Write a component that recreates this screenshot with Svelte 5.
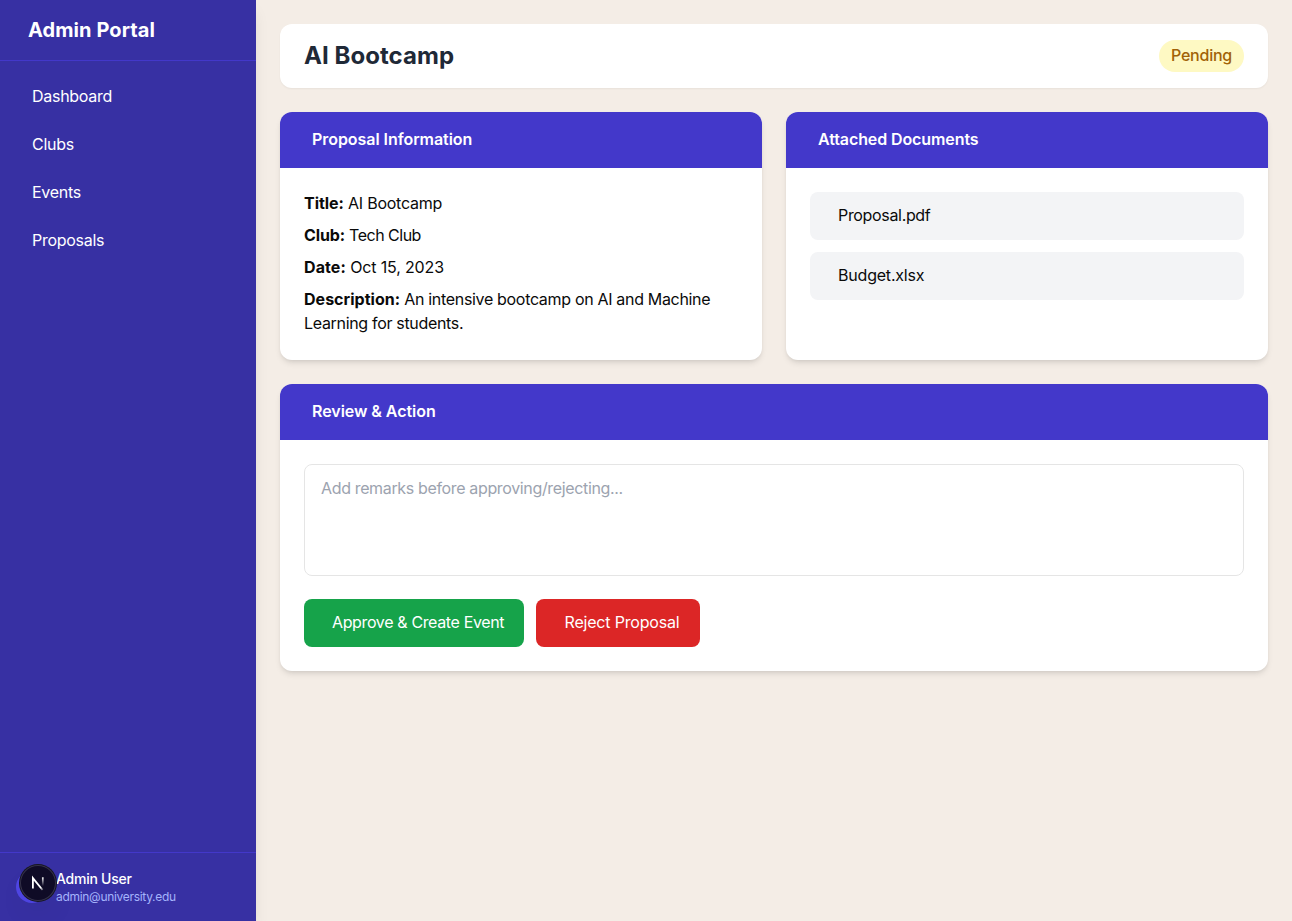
<script>
  const links = ['Dashboard', 'Clubs', 'Events', 'Proposals'];
  const details = [
    { term: 'Title:', value: 'AI Bootcamp', termSpacing: -0.05, spacing: -0.25 },
    { term: 'Club:', value: 'Tech Club', termSpacing: -0.1, spacing: -0.5 },
    { term: 'Date:', value: 'Oct 15, 2023', termSpacing: 0.1, spacing: -0.16 },
    {
      term: 'Description:',
      value: 'An intensive bootcamp on AI and Machine Learning for students.',
      termSpacing: 0.02,
      spacing: -0.32,
    },
  ];
  const files = [
    { name: 'Proposal.pdf', spacing: -0.33 },
    { name: 'Budget.xlsx', spacing: -0.2 },
  ];
</script>

<div class="shell">
  <aside>
    <div class="brand">Admin Portal</div>
    <nav>
      {#each links as link}
        <a href="#top">{link}</a>
      {/each}
    </nav>
    <div class="user">
      <div class="avatar"></div>
      <div class="who">
        <p class="name">Admin User</p>
        <p class="email">admin@university.edu</p>
      </div>
    </div>
  </aside>

  <main>
    <header class="title">
      <h1>AI Bootcamp</h1>
      <span class="status">Pending</span>
    </header>

    <div class="columns">
      <section class="card">
        <h2>Proposal Information</h2>
        <div class="body info">
          {#each details as d}
            <p style:letter-spacing="{d.spacing}px"><strong style:letter-spacing="{d.termSpacing}px">{d.term}</strong> {d.value}</p>
          {/each}
        </div>
      </section>
      <section class="card">
        <h2 class="tight">Attached Documents</h2>
        <ul class="body files">
          {#each files as file}
            <li style:letter-spacing="{file.spacing}px">{file.name}</li>
          {/each}
        </ul>
      </section>
    </div>

    <section class="card">
      <h2>Review &amp; Action</h2>
      <div class="body">
        <textarea placeholder="Add remarks before approving/rejecting..."></textarea>
        <div class="actions">
          <button class="approve">Approve &amp; Create Event</button>
          <button class="reject">Reject Proposal</button>
        </div>
      </div>
    </section>
  </main>

  <div class="devtools">
    <svg width="36" height="36" viewBox="0 0 36 36" fill="none">
      <defs>
        <linearGradient id="diag" x1="18" y1="17" x2="24" y2="25" gradientUnits="userSpaceOnUse">
          <stop stop-color="#fff" /><stop offset="0.6" stop-color="#fff" /><stop offset="1" stop-color="#fff" stop-opacity="0.1" />
        </linearGradient>
        <linearGradient id="stem" x1="22.8" y1="12" x2="22.8" y2="21" gradientUnits="userSpaceOnUse">
          <stop stop-color="#fff" /><stop offset="1" stop-color="#fff" stop-opacity="0" />
        </linearGradient>
      </defs>
      <path d="M12.9 23.4V13.1L22.6 25" stroke="url(#diag)" stroke-width="1.8" />
      <path d="M22.8 12.3V21" stroke="url(#stem)" stroke-width="1.7" />
    </svg>
  </div>
</div>

<style>
  :global(body) {
    margin: 0;
    background: #f4ede6;
  }
  .shell {
    display: flex;
    height: 921px;
    font: 400 16px/24px Inter, sans-serif;
    letter-spacing: -0.25px;
    color: #0a0a0a;
    overflow: hidden;
  }
  .shell :global(*) { box-sizing: border-box; }
  h1, h2, p, ul { margin: 0; padding: 0; }
  aside {
    width: 256px;
    flex: none;
    display: flex;
    flex-direction: column;
    background: #3730a3;
    color: #fff;
    box-shadow: 0 10px 15px -3px rgb(0 0 0 / 0.1), 0 4px 6px -4px rgb(0 0 0 / 0.1);
  }
  .brand {
    padding: 16px 28px;
    font-size: 20px;
    line-height: 28px;
    font-weight: 700;
    letter-spacing: 0.08px;
    border-bottom: 1px solid #4338ca;
  }
  nav {
    flex: 1;
    display: flex;
    flex-direction: column;
    gap: 8px;
    padding: 15px 16px 16px;
    letter-spacing: -0.28px;
  }
  nav a {
    padding: 8px 16px;
    color: inherit;
    text-decoration: none;
  }
  .user {
    display: flex;
    align-items: center;
    gap: 8px;
    padding: 16px;
    border-top: 1px solid #4338ca;
  }
  .avatar {
    width: 32px;
    height: 32px;
    border-radius: 50%;
    background: #4f46e5;
  }
  .name { font-size: 14px; line-height: 20px; font-weight: 500; }
  .email { font-size: 12px; line-height: 16px; color: #a5b4fc; letter-spacing: -0.3px; }
  main {
    flex: 1;
    display: flex;
    flex-direction: column;
    gap: 24px;
    padding: 24px;
  }
  .title {
    display: flex;
    align-items: center;
    justify-content: space-between;
    padding: 16px 24px;
    background: #fff;
    border-radius: 12px;
    box-shadow: 0 1px 2px rgb(0 0 0 / 0.05);
  }
  h1 { font-size: 24px; line-height: 32px; font-weight: 700; color: #1f2937; letter-spacing: 0.05px; }
  .status {
    width: 85px;
    padding: 3px 0 5px;
    text-align: center;
    border-radius: 16px;
    background: #fef9c3;
    color: #a16207;
    font-weight: 500;
  }
  .columns { display: grid; grid-template-columns: 1fr 1fr; gap: 24px; }
  .card {
    background: #fff;
    border-radius: 12px;
    overflow: hidden;
    box-shadow: 0 4px 6px -1px rgb(0 0 0 / 0.1), 0 2px 4px -2px rgb(0 0 0 / 0.1);
  }
  h2 {
    padding: 15px 32px 17px;
    font-size: 16px;
    line-height: 24px;
    font-weight: 600;
    letter-spacing: -0.05px;
    background: #4338ca;
    color: #fff;
  }
  .tight { letter-spacing: -0.1px; }
  .body { padding: 24px; }
  .info { display: flex; flex-direction: column; gap: 8px; padding: 23px 24px 25px; }
  strong { font-weight: 700; }
  .files { display: flex; flex-direction: column; gap: 12px; list-style: none; }
  .files li { padding: 11px 28px 13px; border-radius: 8px; background: #f3f4f6; }
  textarea {
    display: block;
    width: 100%;
    height: 112px;
    padding: 11px 16px;
    border: 1px solid #e5e5e5;
    border-radius: 8px;
    background: #fff;
    font: inherit;
    letter-spacing: -0.35px;
    resize: none;
  }
  textarea::placeholder { color: #9ca3af; opacity: 1; }
  .actions { display: flex; gap: 12px; margin-top: 23px; }
  button {
    height: 48px;
    padding: 0 0 2px 28px;
    border: 0;
    border-radius: 8px;
    color: #fff;
    font: inherit;
    text-align: left;
    white-space: nowrap;
  }
  .approve { width: 220px; background: #16a34a; letter-spacing: -0.36px; }
  .reject { width: 164px; background: #dc2626; letter-spacing: -0.18px; padding-left: 28.5px; }
  .devtools {
    position: absolute;
    left: 20px;
    top: 865px;
    width: 36px;
    height: 36px;
    border-radius: 50%;
    background: #0f0b26;
    box-shadow: 0 0 0 1px #17171f, inset 0 0 0 1px #35324a, 0 16px 32px -8px rgb(0 0 0 / 0.14);
  }
  .devtools svg { display: block; }
</style>
